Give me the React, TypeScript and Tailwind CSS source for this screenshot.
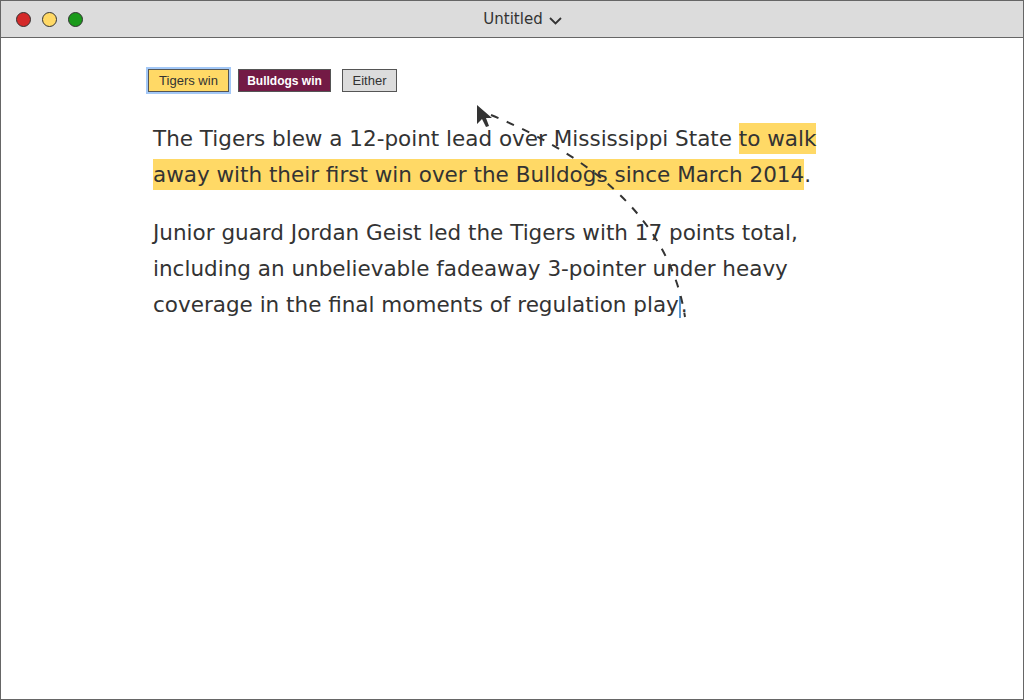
import React from 'react'

const TrafficLight = ({ color }: { color: string }) => (
  <span className={`block w-[15px] h-[15px] rounded-full border border-[#333] ${color}`} />
)

const Title = () => (
  <div className="relative h-[37px] shrink-0 bg-[#dcdcdc] border-b border-[#666] flex items-center">
    <div className="flex items-center gap-[11px] pl-[15px]">
      <TrafficLight color="bg-[#d42a2a]" />
      <TrafficLight color="bg-[#ffd966]" />
      <TrafficLight color="bg-[#1a9a1a]" />
    </div>
    <div className="absolute left-0 right-0 top-0 h-full flex items-center justify-center gap-[5px] text-[15px] text-[#333] [font-family:'DejaVu_Sans',sans-serif]">
      <span className="ml-[22px]">Untitled</span>
      <svg width="15" height="10" viewBox="0 0 15 10" className="mt-[3px]">
        <path d="M2 2 L7.5 7.5 L13 2" fill="none" stroke="#333" strokeWidth="1.8" />
      </svg>
    </div>
  </div>
)

const Hl = ({ children }: { children: React.ReactNode }) => (
  <span className="bg-[#ffd966] py-[3px]">{children}</span>
)

const Overlay = () => (
  <svg className="absolute left-0 top-0 pointer-events-none" width="1024" height="700">
    <path
      d="M490 114 Q664 186 684 316"
      fill="none"
      stroke="#333"
      strokeWidth="2"
      strokeDasharray="8 9"
    />
    <path
      d="M476 104 L476 123 L481 118 L485 126 L488 125 L485 117 L491 117 Z"
      fill="#333"
    />
  </svg>
)

export default function App() {
  return (
    <div className="relative w-[1024px] h-[700px] bg-white border border-[#666] flex flex-col overflow-hidden">
      <Title />
      <div className="pl-[147px] pt-[31px]">
        <div className="flex items-center gap-[9px] text-[13px] [font-family:'Liberation_Sans',Arial,sans-serif]">
          <button className="w-[81px] h-[23px] bg-[#ffd966] border border-[#555] text-[#333] ring-2 ring-[#a3c8f7]">
            Tigers win
          </button>
          <button className="w-[93px] h-[23px] bg-[#731a45] border border-[#555] text-white text-[12px] font-bold">
            Bulldogs win
          </button>
          <button className="ml-[2px] w-[55px] h-[23px] bg-[#dcdcdc] border border-[#555] text-[#333]">
            Either
          </button>
        </div>
      </div>
      <div className="pl-[152px] pt-[29px] text-[21.5px] leading-[36px] text-[#333] whitespace-nowrap [font-family:'DejaVu_Sans',sans-serif]">
        <p>
          The Tigers blew a 12-point lead over Mississippi State <Hl>to walk</Hl>
          <br />
          <Hl>away with their first win over the Bulldogs since March 2014</Hl>.
        </p>
        <p className="mt-[22px]">
          Junior guard Jordan Geist led the Tigers with 17 points total,
          <br />
          including an unbelievable fadeaway 3-pointer under heavy
          <br />
          coverage in the final moments of regulation play
          <span className="inline-block w-[2px] h-[22px] bg-[#5b9bd5] align-[-6px]" />.
        </p>
      </div>
      <Overlay />
    </div>
  )
}
